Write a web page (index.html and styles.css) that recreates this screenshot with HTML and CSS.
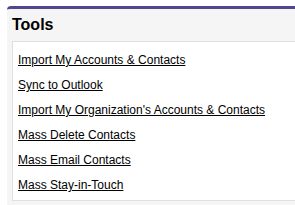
FILE: index.html
```html
<!DOCTYPE html>
<html lang="en">
<head>
  <meta charset="UTF-8" />
  <title>Tools</title>
  <link rel="stylesheet" href="styles.css">
</head>
<body>
  <div class="panel">
    <h2>Tools</h2>
    <div class="panel-body">
      <ul class="tool-list">
        <li><a href="#">Import My Accounts &amp; Contacts</a></li>
        <li><a href="#">Sync to Outlook</a></li>
        <li><a href="#">Import My Organization's Accounts &amp; Contacts</a></li>
        <li><a href="#">Mass Delete Contacts</a></li>
        <li><a href="#">Mass Email Contacts</a></li>
        <li><a href="#">Mass Stay-in-Touch</a></li>
      </ul>
    </div>
  </div>
</body>
</html>
```

FILE: styles.css
```css
body {
  margin: 0;
  font-family: 'Liberation Sans', Arial, sans-serif;
  background: #fff;
}
.panel {
  margin: 6px 0 0 7px;
  background: #f5f5f5;
  border-top: 3px solid #54468e;
  border-top-left-radius: 4px;
  padding: 0 0 4px 5px;
}
h2 {
  margin: 0;
  padding: 6px 0 7px 0;
  font-size: 16px;
  line-height: 19px;
  color: #000;
}
.panel-body {
  background: #fff;
  border: 1px solid #e0e0e0;
  border-right: none;
  height: 158px;
}
.tool-list {
  list-style: none;
  margin: 0;
  padding: 11px 0 0 5px;
}
.tool-list li {
  height: 25px;
  font-size: 12px;
  line-height: 15px;
}
.tool-list a {
  color: #000;
  text-decoration: underline;
}
```
